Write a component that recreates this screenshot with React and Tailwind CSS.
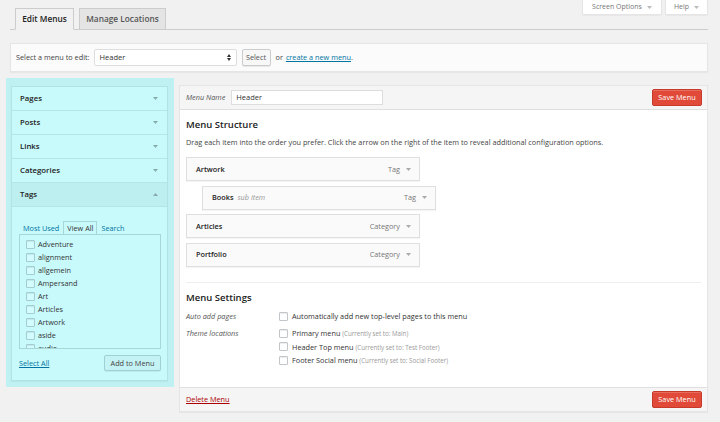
import React from 'react'

const Caret = ({ up, className = '' }) => (
  <svg width="5" height="3" viewBox="0 0 5 3" className={className}>
    <polygon points={up ? '0,3 5,3 2.5,0' : '0,0 5,0 2.5,3'} fill="currentColor" />
  </svg>
)

const Box = ({ tint }) => (
  <span
    className={`inline-block w-[9px] h-[9px] shrink-0 rounded-[1px] border ${
      tint ? 'border-[#a3cdd0] bg-[#d2fcfd]' : 'border-[#c3c6c9] bg-white'
    } shadow-[inset_0_1px_1px_rgba(0,0,0,0.08)]`}
  />
)

const sections = ['Pages', 'Posts', 'Links', 'Categories']
const tags = ['Adventure', 'alignment', 'allgemein', 'Ampersand', 'Art', 'Articles', 'Artwork', 'aside', 'audio']

const items = [
  { title: 'Artwork', type: 'Tag' },
  { title: 'Books', type: 'Tag', sub: true },
  { title: 'Articles', type: 'Category' },
  { title: 'Portfolio', type: 'Category' },
]

const locations = [
  ['Primary menu', 'Main'],
  ['Header Top menu', 'Test Footer'],
  ['Footer Social menu', 'Social Footer'],
]

function SaveButton() {
  return (
    <button className="w-[50px] h-[17px] rounded-[2px] bg-[#e14a38] border border-[#c63a2b] text-white text-[7.3px] leading-none shadow-[inset_0_1px_0_rgba(255,255,255,0.2)]">
      Save Menu
    </button>
  )
}

export default function App() {
  return (
    <div className="w-[720px] h-[422px] overflow-hidden bg-[#f1f1f1] pl-[10px] pr-[12px] font-['Open_Sans',sans-serif] text-[7.3px] text-[#444]">
      {/* Tabs + screen options */}
      <div className="flex justify-between h-[30px] border-b border-[#ccc]">
        <div className="flex items-end gap-[5px] pl-[5px]">
          <div className="-mb-px h-[22px] w-[59px] flex items-center justify-center border border-[#ccc] border-b-[#f1f1f1] bg-[#f1f1f1] text-[8.3px] font-semibold text-[#222]">
            Edit Menus
          </div>
          <div className="-mb-px h-[22px] w-[87px] flex items-center justify-center border border-[#ccc] bg-[#e4e4e4] text-[8.3px] font-semibold text-[#555]">
            Manage Locations
          </div>
        </div>
        <div className="flex items-start gap-[3px]">
          <div className="w-[80px] h-[15px] flex items-center justify-center gap-[5px] bg-white border border-t-0 border-[#e5e5e5] rounded-b-[2px] text-[7px] text-[#777] shadow-[0_1px_1px_rgba(0,0,0,0.04)]">
            Screen Options <Caret className="text-[#bbb]" />
          </div>
          <div className="w-[43px] h-[15px] flex items-center justify-center gap-[5px] bg-white border border-t-0 border-[#e5e5e5] rounded-b-[2px] text-[7px] text-[#777] shadow-[0_1px_1px_rgba(0,0,0,0.04)]">
            Help <Caret className="text-[#bbb]" />
          </div>
        </div>
      </div>

      {/* Select a menu bar */}
      <div className="mt-[13px] h-[29px] flex items-center px-[5px] bg-[#fbfbfb] border border-[#e5e5e5] shadow-[0_1px_1px_rgba(0,0,0,0.04)] text-[#444]">
        <span>Select a menu to edit:</span>
        <div className="ml-[4px] w-[143px] h-[17px] flex items-center justify-between px-[5px] bg-white border border-[#ddd] rounded-[2px] text-[#333]">
          <span className="text-[7.5px]">Header</span>
          <svg width="4" height="7" viewBox="0 0 4 7">
            <polygon points="0,3 4,3 2,0" fill="#333" />
            <polygon points="0,4 4,4 2,7" fill="#333" />
          </svg>
        </div>
        <div className="ml-[5px] w-[29px] h-[17px] flex items-center justify-center bg-[#f7f7f7] border border-[#ccc] rounded-[2px] text-[#555] shadow-[0_1px_0_rgba(0,0,0,0.08)]">
          Select
        </div>
        <span className="ml-[5px]">or</span>
        <a className="ml-[3px] text-[#0074a2] underline">create a new menu</a>
        <span>.</span>
      </div>

      {/* Main area */}
      <div className="mt-[6px] flex items-start">
        {/* Sidebar (highlighted) */}
        <div className="-ml-[4px] w-[168px] pt-[8px] pl-[5px] pr-[6px] pb-[6px] bg-[#bff0f2]">
          <div className="bg-[#c8fafc] border border-[#b0e3e5] shadow-[0_1px_1px_rgba(0,0,0,0.04)]">
            {sections.map((s) => (
              <div key={s} className="h-[24px] flex items-center justify-between pl-[8px] pr-[9px] border-b border-[#b4e6e8] text-[7.8px] font-semibold text-[#222]">
                {s}
                <Caret className="text-[#8aa]" />
              </div>
            ))}
            <div className="h-[24px] flex items-center justify-between pl-[8px] pr-[9px] border-b border-[#b4e6e8] bg-[#bdeff1] text-[7.8px] font-semibold text-[#222]">
              Tags
              <Caret up className="text-[#8aa]" />
            </div>
            <div className="pt-[14px] pl-[7px] pr-[6px] pb-[9px]">
              <div className="flex items-end h-[13px] pl-[4px]">
                <span className="text-[#0074a2] mr-[4px] leading-[12px]">Most Used</span>
                <span className="h-[13px] px-[3px] flex items-center border border-b-0 border-[#a8d7da] text-[#333]">View All</span>
                <span className="ml-[4px] text-[#0074a2] leading-[12px]">Search</span>
              </div>
              <div className="h-[115px] overflow-hidden border border-[#a8d7da] pt-[3px] pl-[6px]">
                {tags.map((t) => (
                  <div key={t} className="h-[13px] flex items-center gap-[3px] text-[#333]">
                    <Box tint />
                    {t}
                  </div>
                ))}
              </div>
              <div className="mt-[6px] flex items-center justify-between">
                <a className="text-[#0074a2] underline">Select All</a>
                <div className="w-[57px] h-[16px] flex items-center justify-center bg-[#c4f3f5] border border-[#a0d0d3] rounded-[2px] text-[#444] shadow-[0_1px_0_rgba(0,0,0,0.06)]">
                  Add to Menu
                </div>
              </div>
            </div>
          </div>
        </div>

        {/* Menu editor */}
        <div className="ml-[5px] mt-[7px] flex-1 border border-[#e5e5e5] shadow-[0_1px_1px_rgba(0,0,0,0.04)]">
          <div className="h-[24px] flex items-center justify-between pl-[6px] pr-[5px] bg-[#f5f5f5] border-b border-[#dfdfdf]">
            <div className="flex items-center">
              <span className="italic text-[#555]">Menu Name</span>
              <div className="ml-[6px] w-[152px] h-[15px] flex items-center px-[4px] bg-white border border-[#ddd] text-[7.5px] text-[#333]">
                Header
              </div>
            </div>
            <SaveButton />
          </div>

          <div className="bg-white px-[6px] pt-[9px] pb-[20px]">
            <h3 className="text-[9.5px] leading-[12px] font-semibold text-[#222]">Menu Structure</h3>
            <p className="mt-[7px] leading-[9px] text-[#444]">
              Drag each item into the order you prefer. Click the arrow on the right of the item to reveal additional configuration options.
            </p>
            <div className="mt-[10px] flex flex-col gap-[4.6px]">
              {items.map((it) => (
                <div
                  key={it.title}
                  className={`${it.sub ? 'ml-[16px]' : ''} w-[234px] h-[24px] flex items-center justify-between pl-[9px] pr-[8px] bg-[#fafafa] border border-[#dfdfdf] shadow-[0_1px_1px_rgba(0,0,0,0.04)]`}
                >
                  <span className="font-semibold text-[#222]">
                    {it.title}
                    {it.sub && <span className="ml-[4px] font-normal italic text-[#999]">sub item</span>}
                  </span>
                  <span className="flex items-center gap-[6px] text-[#777]">
                    {it.type}
                    <Caret className="text-[#aaa]" />
                  </span>
                </div>
              ))}
            </div>

            <div className="mt-[15px] border-t border-[#eee] pt-[9px]">
              <h3 className="text-[9.5px] leading-[12px] font-semibold text-[#222]">Menu Settings</h3>
              <div className="mt-[7px] flex items-center">
                <span className="w-[93px] italic text-[#555]">Auto add pages</span>
                <span className="flex items-center gap-[4px] text-[#333]">
                  <Box />
                  Automatically add new top-level pages to this menu
                </span>
              </div>
              <div className="mt-[5px] flex items-start">
                <span className="w-[93px] italic text-[#555] leading-[13.5px]">Theme locations</span>
                <div className="flex flex-col">
                  {locations.map(([name, set]) => (
                    <span key={name} className="h-[13.5px] flex items-center gap-[4px] text-[#333]">
                      <Box />
                      <span>
                        {name} <span className="text-[6.2px] text-[#999]">(Currently set to: {set})</span>
                      </span>
                    </span>
                  ))}
                </div>
              </div>
            </div>
          </div>

          <div className="h-[24px] flex items-center justify-between pl-[6px] pr-[5px] bg-[#f5f5f5] border-t border-[#dfdfdf]">
            <a className="text-[#a00] underline">Delete Menu</a>
            <SaveButton />
          </div>
        </div>
      </div>
    </div>
  )
}
